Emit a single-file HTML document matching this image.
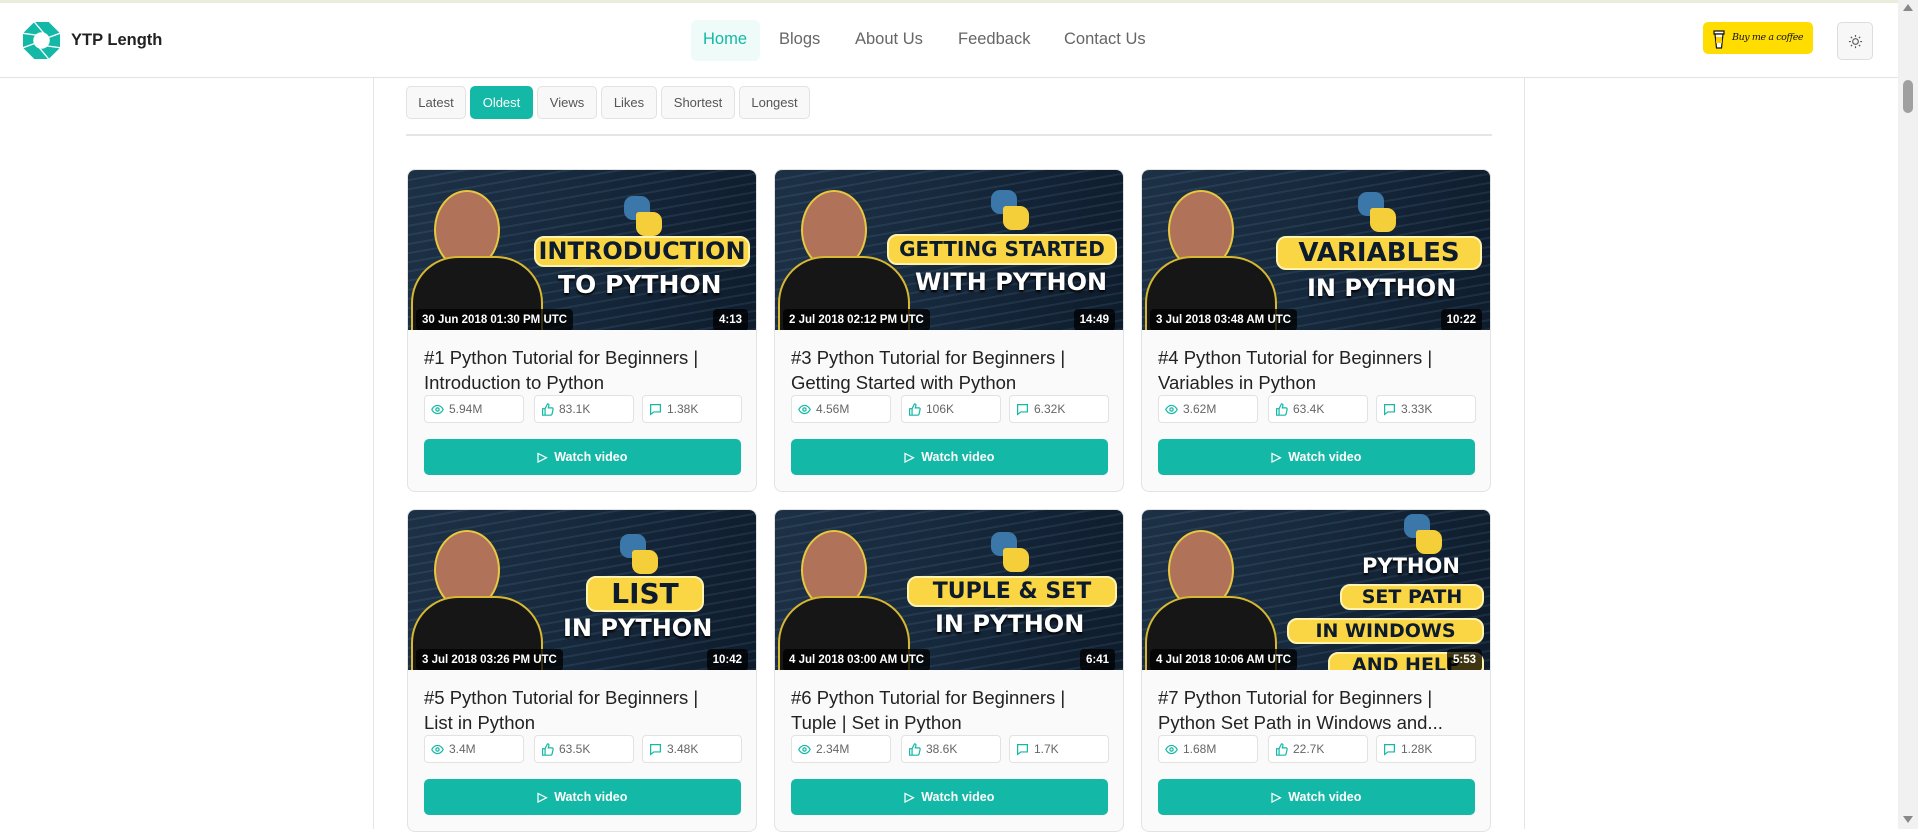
<!DOCTYPE html>
<html><head><meta charset="utf-8"><style>
*{box-sizing:border-box;margin:0;padding:0}
body{width:1918px;height:829px;overflow:hidden;background:#fff;font-family:"Liberation Sans",sans-serif;position:relative}
.topline{position:absolute;left:0;top:0;width:1898px;height:3px;background:#e9eddc}
header{position:absolute;left:0;top:3px;width:1898px;height:75px;background:#fff;border-bottom:1px solid #e3e3e3;z-index:5}
.logo{position:absolute;left:23px;top:19px}
.brand{position:absolute;left:71px;top:28px;font-size:16.5px;font-weight:bold;color:#222}
.nav a{position:absolute;top:27px;font-size:16.5px;color:#666;text-decoration:none}
.home{position:absolute;left:691px;top:17px;width:69px;height:41px;background:#eefbf8;border-radius:6px}
.coffee{position:absolute;left:1703px;top:19px;width:110px;height:32px;background:#ffdd00;border-radius:5px;font-family:"DejaVu Serif",serif;font-style:italic;font-size:9.5px;color:#111;padding:10px 0 0 29px;letter-spacing:-.4px;white-space:nowrap;overflow:hidden}
.theme{position:absolute;left:1837px;top:19px;width:36px;height:38px;border:1px solid #ddd;border-radius:5px;background:#f7f7f7}
.scroll{position:absolute;left:1898px;top:0;width:20px;height:829px;background:#f1f1f1;z-index:10}
.thumb{position:absolute;left:5px;top:80px;width:10px;height:33px;background:#a0a0a0;border-radius:5px}
.vl{position:absolute;top:78px;width:1px;height:751px;background:#e5e5e5}
.sort{position:absolute;top:86px;height:33px;border:1px solid #e2e2e2;border-radius:5px;background:#f8f8f8;font-size:13px;color:#555;text-align:center;line-height:31px}
.sort.on{background:#14b8a6;color:#fff;border-color:#14b8a6}
.div{position:absolute;left:406px;top:134px;width:1086px;height:2px;background:#e5e5e5}
.card{position:absolute;width:350px;height:323px;border:1px solid #e3e3e3;border-radius:8px;background:#fafafa;overflow:hidden}
.img{position:relative;height:160px;background:linear-gradient(100deg,#1d3045 0%,#17293d 45%,#0e1c2c 100%);overflow:hidden}
.code{position:absolute;left:0;top:0;width:350px;height:160px;background:repeating-linear-gradient(170deg,rgba(120,170,200,.12) 0 2px,transparent 2px 9px)}
.head{position:absolute;left:28px;top:22px;width:62px;height:76px;border-radius:50%;background:#b07258;box-shadow:0 0 0 2px #e8c840}
.body{position:absolute;left:5px;top:88px;width:128px;height:90px;border-radius:45px 45px 0 0;background:#161616;box-shadow:0 0 0 2px #d8b830}
.py{position:absolute;width:44px;height:44px}
.py:before{content:"";position:absolute;left:4px;top:2px;width:26px;height:24px;background:#3b77a8;border-radius:9px 9px 3px 9px}
.py:after{content:"";position:absolute;left:16px;top:18px;width:26px;height:24px;background:#f5cf3a;border-radius:3px 9px 9px 9px}
.pill{position:absolute;background:#fad544;border:2px solid #fff3b0;border-radius:10px;color:#0d1b2e;font-family:"DejaVu Sans",sans-serif;font-weight:bold;text-align:center;white-space:nowrap}
.wt{position:absolute;color:#fff;font-family:"DejaVu Sans",sans-serif;font-weight:bold;white-space:nowrap;text-shadow:0 2px 2px #000}
.date{position:absolute;left:8px;top:139px;height:22px;padding:0 6px;background:rgba(0,0,0,.75);border-radius:4px;color:#fff;font-size:11.5px;font-weight:bold;line-height:22px}
.dur{position:absolute;right:8px;top:139px;height:22px;padding:0 6px;background:rgba(0,0,0,.75);border-radius:4px;color:#fff;font-size:11.5px;font-weight:bold;line-height:22px}
.title{position:absolute;left:16px;top:175px;width:305px;font-size:18.5px;line-height:25px;color:#222}
.stat{position:absolute;top:225px;width:100px;height:28px;border:1px solid #e2e2e2;border-radius:4px;background:#fff;font-size:12px;color:#666;line-height:26px;padding-left:24px}
.stat svg{position:absolute;left:6px;top:7px}
.btn{position:absolute;left:16px;top:269px;width:317px;height:36px;background:#14b8a6;border-radius:5px;color:#fff;font-size:12.5px;font-weight:bold;text-align:center;line-height:36px}
</style></head><body>
<div class="topline"></div>
<header>
<svg class="logo" width="37" height="37" viewBox="0 0 36 36"><polygon points="11,0 25,0 36,11 36,25 25,36 11,36 0,25 0,11" fill="#14b8a6"/><circle cx="18" cy="18" r="8" fill="#fff"/><g stroke="#fff" stroke-width="1.3" fill="none"><path d="M11 0 L22 13"/><path d="M36 11 L22 16"/><path d="M36 25 L21 23"/><path d="M25 36 L15 24"/><path d="M0 25 L14 20"/><path d="M0 11 L15 13"/></g></svg>
<div class="brand">YTP Length</div>
<div class="home"></div>
<div class="nav"><a style="left:703px;color:#14b8a6">Home</a><a style="left:779px">Blogs</a><a style="left:855px">About Us</a><a style="left:958px">Feedback</a><a style="left:1064px">Contact Us</a></div>
<div class="coffee"><svg style="position:absolute;left:9px;top:6px" width="14" height="21" viewBox="0 0 14 21"><path d="M2 3h10v3H2z" fill="#fff" stroke="#111" stroke-width="1.2"/><path d="M3 6l1.5 14h5L11 6z" fill="#fff" stroke="#111" stroke-width="1.2"/><rect x="4" y="9" width="6" height="6" fill="#fcd000"/></svg>Buy me a coffee</div>
<div class="theme"><svg style="position:absolute;left:10px;top:11px" width="15" height="15" viewBox="0 0 16 16" stroke="#555" fill="none" stroke-width="1.2"><circle cx="8" cy="8" r="3"/><path d="M8 1v2M8 13v2M1 8h2M13 8h2M3 3l1.4 1.4M11.6 11.6L13 13M3 13l1.4-1.4M11.6 4.4L13 3"/></svg></div>
</header>
<div class="scroll"><div class="thumb"></div><div style="position:absolute;left:5px;top:4px;border:5px solid transparent;border-bottom:7px solid #888;border-top:0"></div><div style="position:absolute;left:5px;top:816px;border:5px solid transparent;border-top:7px solid #888;border-bottom:0"></div></div>
<div class="vl" style="left:373px"></div><div class="vl" style="left:1524px"></div>
<div class="sort" style="left:406px;width:60px">Latest</div>
<div class="sort on" style="left:470px;width:63px">Oldest</div>
<div class="sort" style="left:537px;width:60px">Views</div>
<div class="sort" style="left:601px;width:56px">Likes</div>
<div class="sort" style="left:661px;width:74px">Shortest</div>
<div class="sort" style="left:739px;width:71px">Longest</div>
<div class="div"></div>

<div class="card" style="left:407px;top:169px"><div class="img"><div class="code"></div><div class="head"></div><div class="body"></div><div class="py" style="left:212px;top:24px"></div><div class="pill" style="left:126px;top:66px;width:216px;height:31px;font-size:24px;line-height:27px">INTRODUCTION</div><div class="wt" style="left:150px;top:100px;font-size:25px">TO PYTHON</div><div class="date">30 Jun 2018 01:30 PM UTC</div><div class="dur">4:13</div></div>
<div class="title">#1 Python Tutorial for Beginners | Introduction to Python</div>
<div class="stat" style="left:16px">5.94M</div><div class="stat" style="left:126px">83.1K</div><div class="stat" style="left:234px">1.38K</div>
<div class="btn">▷&nbsp; Watch video</div></div>

<div class="card" style="left:774px;top:169px"><div class="img"><div class="code"></div><div class="head"></div><div class="body"></div><div class="py" style="left:212px;top:18px"></div><div class="pill" style="left:112px;top:64px;width:230px;height:31px;font-size:20px;line-height:27px">GETTING STARTED</div><div class="wt" style="left:140px;top:98px;font-size:24px">WITH PYTHON</div><div class="date">2 Jul 2018 02:12 PM UTC</div><div class="dur">14:49</div></div>
<div class="title">#3 Python Tutorial for Beginners | Getting Started with Python</div>
<div class="stat" style="left:16px">4.56M</div><div class="stat" style="left:126px">106K</div><div class="stat" style="left:234px">6.32K</div>
<div class="btn">▷&nbsp; Watch video</div></div>

<div class="card" style="left:1141px;top:169px"><div class="img"><div class="code"></div><div class="head"></div><div class="body"></div><div class="py" style="left:212px;top:20px"></div><div class="pill" style="left:134px;top:66px;width:206px;height:34px;font-size:26px;line-height:30px">VARIABLES</div><div class="wt" style="left:165px;top:104px;font-size:24px">IN PYTHON</div><div class="date">3 Jul 2018 03:48 AM UTC</div><div class="dur">10:22</div></div>
<div class="title">#4 Python Tutorial for Beginners | Variables in Python</div>
<div class="stat" style="left:16px">3.62M</div><div class="stat" style="left:126px">63.4K</div><div class="stat" style="left:234px">3.33K</div>
<div class="btn">▷&nbsp; Watch video</div></div>

<div class="card" style="left:407px;top:509px"><div class="img"><div class="code"></div><div class="head"></div><div class="body"></div><div class="py" style="left:208px;top:22px"></div><div class="pill" style="left:178px;top:66px;width:118px;height:36px;font-size:28px;line-height:32px">LIST</div><div class="wt" style="left:155px;top:104px;font-size:24px">IN PYTHON</div><div class="date">3 Jul 2018 03:26 PM UTC</div><div class="dur">10:42</div></div>
<div class="title">#5 Python Tutorial for Beginners | List in Python</div>
<div class="stat" style="left:16px">3.4M</div><div class="stat" style="left:126px">63.5K</div><div class="stat" style="left:234px">3.48K</div>
<div class="btn">▷&nbsp; Watch video</div></div>

<div class="card" style="left:774px;top:509px"><div class="img"><div class="code"></div><div class="head"></div><div class="body"></div><div class="py" style="left:212px;top:20px"></div><div class="pill" style="left:132px;top:66px;width:210px;height:31px;font-size:22px;line-height:27px">TUPLE &amp; SET</div><div class="wt" style="left:160px;top:100px;font-size:24px">IN PYTHON</div><div class="date">4 Jul 2018 03:00 AM UTC</div><div class="dur">6:41</div></div>
<div class="title">#6 Python Tutorial for Beginners | Tuple | Set in Python</div>
<div class="stat" style="left:16px">2.34M</div><div class="stat" style="left:126px">38.6K</div><div class="stat" style="left:234px">1.7K</div>
<div class="btn">▷&nbsp; Watch video</div></div>

<div class="card" style="left:1141px;top:509px"><div class="img"><div class="code"></div><div class="head"></div><div class="body"></div><div class="py" style="left:258px;top:2px"></div><div class="wt" style="left:220px;top:44px;font-size:21px">PYTHON</div><div class="pill" style="left:198px;top:74px;width:144px;height:26px;font-size:19px;line-height:22px">SET PATH</div><div class="pill" style="left:145px;top:108px;width:197px;height:26px;font-size:19px;line-height:22px">IN WINDOWS</div><div class="pill" style="left:186px;top:142px;width:156px;height:26px;font-size:19px;line-height:22px">AND HELP</div><div class="date">4 Jul 2018 10:06 AM UTC</div><div class="dur">5:53</div></div>
<div class="title">#7 Python Tutorial for Beginners | Python Set Path in Windows and...</div>
<div class="stat" style="left:16px">1.68M</div><div class="stat" style="left:126px">22.7K</div><div class="stat" style="left:234px">1.28K</div>
<div class="btn">▷&nbsp; Watch video</div></div>

<script>
var eye='<svg width="13" height="13" viewBox="0 0 16 16" fill="none" stroke="#14b8a6" stroke-width="1.5"><path d="M1 8s2.5-5 7-5 7 5 7 5-2.5 5-7 5-7-5-7-5z"/><circle cx="8" cy="8" r="2"/></svg>';
var like='<svg width="13" height="13" viewBox="0 0 16 16" fill="none" stroke="#14b8a6" stroke-width="1.5"><path d="M2 7h3v8H2zM5 7l3-6c1.5 0 2 1 1.7 2.5L9 6h4.5c1 0 1.6.8 1.4 1.8l-1.2 5.5c-.2.9-.9 1.7-1.8 1.7H5"/></svg>';
var com='<svg width="13" height="13" viewBox="0 0 16 16" fill="none" stroke="#14b8a6" stroke-width="1.5"><path d="M2 2h12v9H6l-4 3z"/></svg>';
document.querySelectorAll('.card').forEach(function(c){var s=c.querySelectorAll('.stat');s[0].insertAdjacentHTML('afterbegin',eye);s[1].insertAdjacentHTML('afterbegin',like);s[2].insertAdjacentHTML('afterbegin',com);});
</script>
</body></html>
